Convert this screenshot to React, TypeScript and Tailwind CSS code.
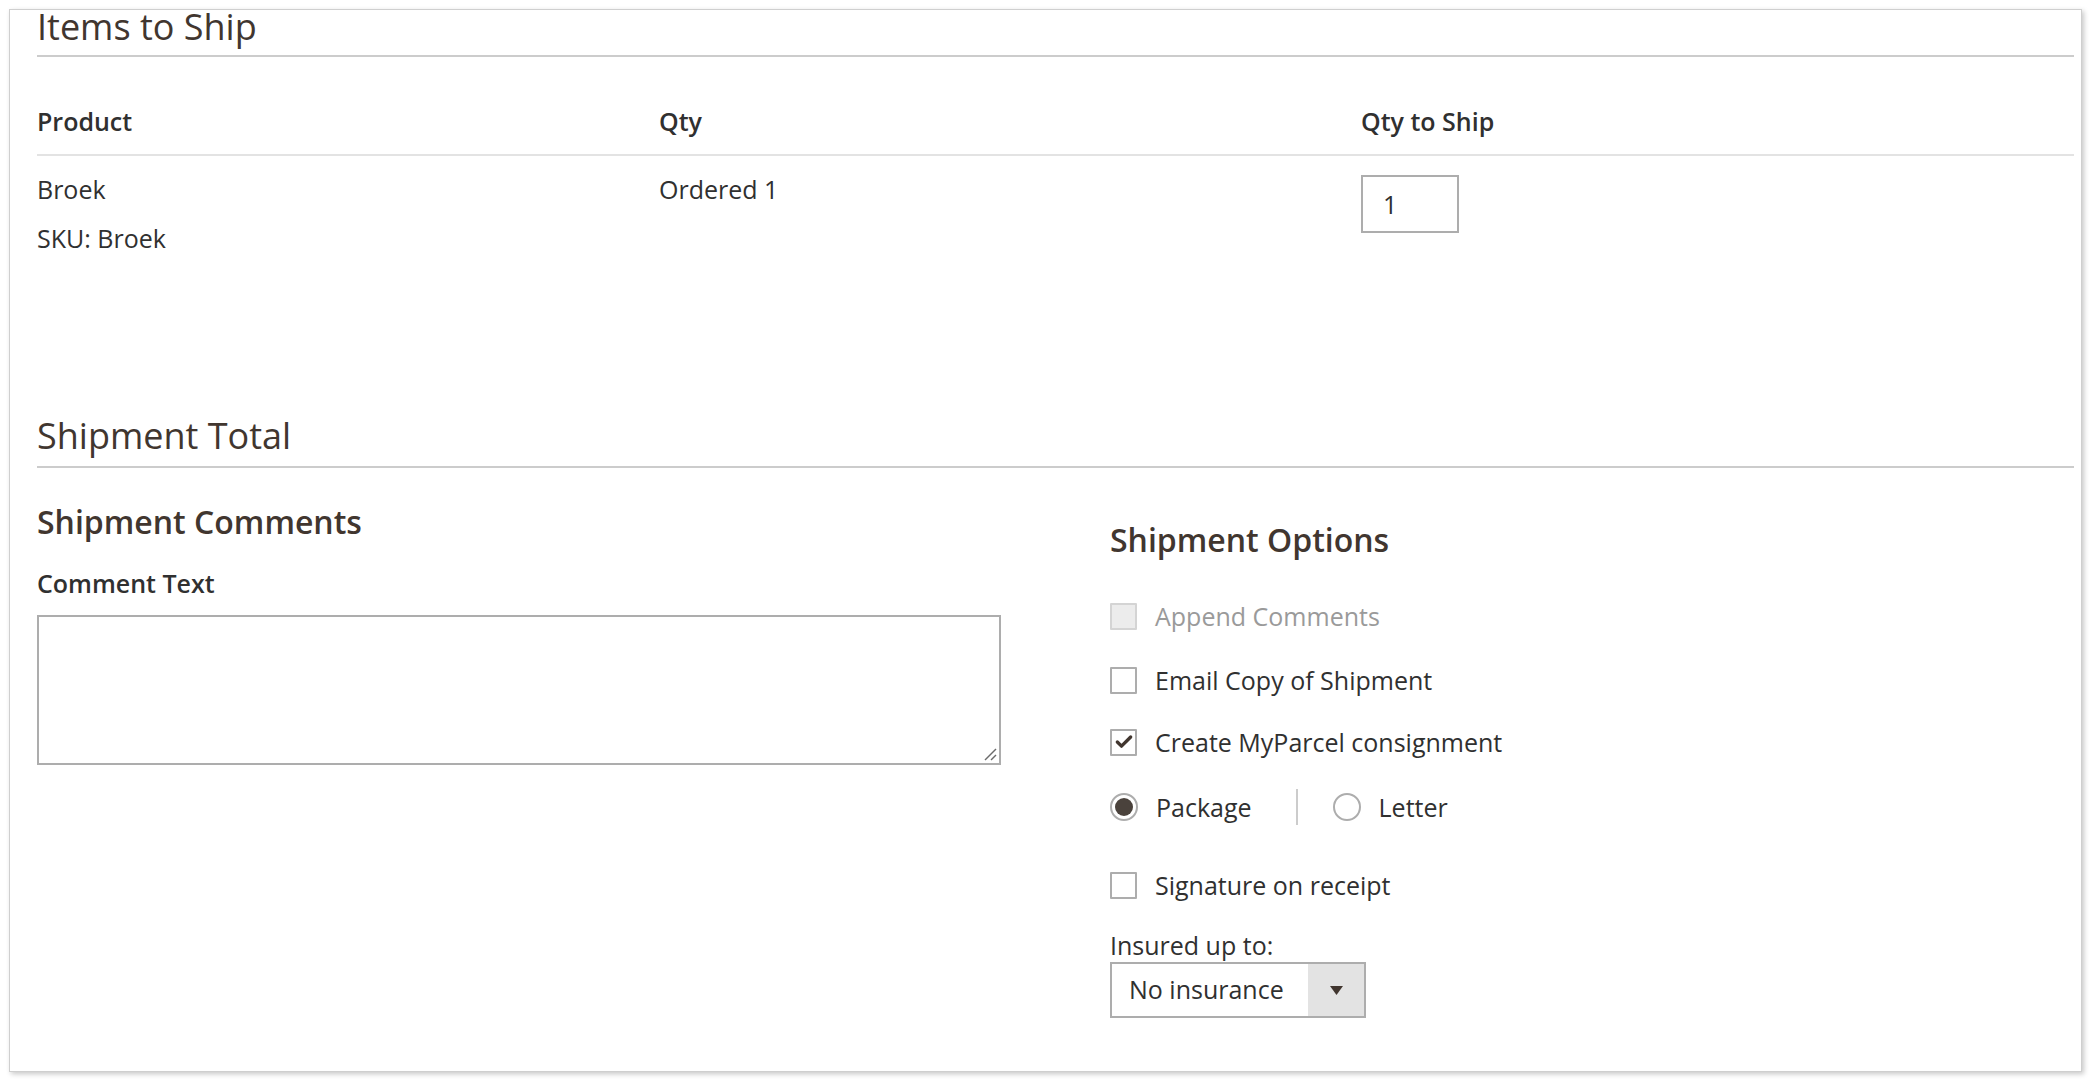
import { Check } from "lucide-react";

type Opt = { label: string; checked?: boolean; disabled?: boolean; mt: string };

function CheckRow({ label, checked, disabled, mt }: Opt) {
  return (
    <div className={`flex items-center ${mt}`}>
      <span
        className={`flex h-[27px] w-[27px] items-center justify-center rounded-[1px] border-2 ${
          disabled ? "border-[#d4d4d4] bg-[#ececec]" : "border-[#adadad] bg-white"
        }`}
      >
        {checked && <Check className="h-[20px] w-[20px] text-[#41362f]" strokeWidth={4} />}
      </span>
      <span className={`ml-[18px] leading-[30px] ${disabled ? "text-[#9a9a9a]" : "text-[#303030]"}`}>
        {label}
      </span>
    </div>
  );
}

function Radio({ checked }: { checked?: boolean }) {
  return (
    <span className="flex h-[28px] w-[28px] items-center justify-center rounded-full border-2 border-[#adadad] bg-white p-[3px]">
      {checked && <span className="h-full w-full rounded-full bg-[#4a423c]" />}
    </span>
  );
}

export default function App() {
  return (
    <div className="h-[1082px] w-[2092px] bg-white pl-[9px] pt-[9px] font-['Open_Sans',sans-serif] text-[25px] text-[#303030]">
      <div className="h-[1063px] w-[2073px] border border-[#cfcfcf] bg-white pl-[27px] pr-[7px] shadow-[2px_2px_5px_rgba(0,0,0,0.22)]">
        {/* Items to Ship */}
        <div className="border-b-2 border-[#cccccc] pb-[11px]">
          <h2 className="text-[36px] font-normal leading-[34px] text-[#41362f]">Items to Ship</h2>
        </div>

        <div className="grid grid-cols-[622px_702px_1fr] border-b-2 border-[#e3e3e3] pb-[18px] pt-[49px] font-semibold leading-[30px] text-[#303030]">
          <div>Product</div>
          <div>Qty</div>
          <div>Qty to Ship</div>
        </div>
        <div className="grid grid-cols-[622px_702px_1fr] pt-[18px] leading-[30px]">
          <div>
            <div>Broek</div>
            <div className="mt-[19px]">SKU: Broek</div>
          </div>
          <div>Ordered 1</div>
          <div className="pt-[1px]">
            <div className="flex h-[58px] w-[98px] items-center border-2 border-[#adadad] pl-[20px]">1</div>
          </div>
        </div>

        {/* Shipment Total */}
        <div className="mt-[166px] border-b-2 border-[#cccccc] pb-[13px]">
          <h2 className="text-[36px] font-normal leading-[34px] text-[#41362f]">Shipment Total</h2>
        </div>

        <div className="flex">
          <div className="w-[964px]">
            <h3 className="mt-[36px] text-[32px] font-semibold leading-[36px] text-[#41362f]">
              Shipment Comments
            </h3>
            <div className="mt-[28px] font-semibold leading-[30px] text-[#303030]">Comment Text</div>
            <div className="relative mt-[17px] h-[150px] w-[964px] border-2 border-[#adadad]">
              <svg className="absolute bottom-[2px] right-[2px]" width="14" height="14" viewBox="0 0 14 14">
                <line x1="2" y1="13" x2="13" y2="2" stroke="#6b6b6b" strokeWidth="1.5" />
                <line x1="8" y1="13" x2="13" y2="8" stroke="#6b6b6b" strokeWidth="1.5" />
              </svg>
            </div>
          </div>

          <div className="ml-[109px]">
            <h3 className="mt-[54px] text-[32px] font-semibold leading-[36px] text-[#41362f]">
              Shipment Options
            </h3>
            <CheckRow label="Append Comments" disabled mt="mt-[43px]" />
            <CheckRow label="Email Copy of Shipment" mt="mt-[34px]" />
            <CheckRow label="Create MyParcel consignment" checked mt="mt-[32px]" />

            <div className="mt-[32px] flex items-center leading-[30px]">
              <Radio checked />
              <span className="ml-[18px]">Package</span>
              <span className="ml-[44px] h-[36px] w-[2px] bg-[#cccccc]" />
              <span className="ml-[35px]">
                <Radio />
              </span>
              <span className="ml-[18px]">Letter</span>
            </div>

            <CheckRow label="Signature on receipt" mt="mt-[45px]" />

            <div className="mt-[30px] leading-[30px]">Insured up to:</div>
            <div className="mt-[2px] flex h-[56px] w-[256px] items-stretch border-2 border-[#adadad]">
              <span className="flex flex-1 items-center pl-[17px]">No insurance</span>
              <span className="flex w-[56px] items-center justify-center bg-[#e3e3e3]">
                <svg width="13" height="9" viewBox="0 0 13 9">
                  <polygon points="0,0 13,0 6.5,9" fill="#41362f" />
                </svg>
              </span>
            </div>
          </div>
        </div>
      </div>
    </div>
  );
}
